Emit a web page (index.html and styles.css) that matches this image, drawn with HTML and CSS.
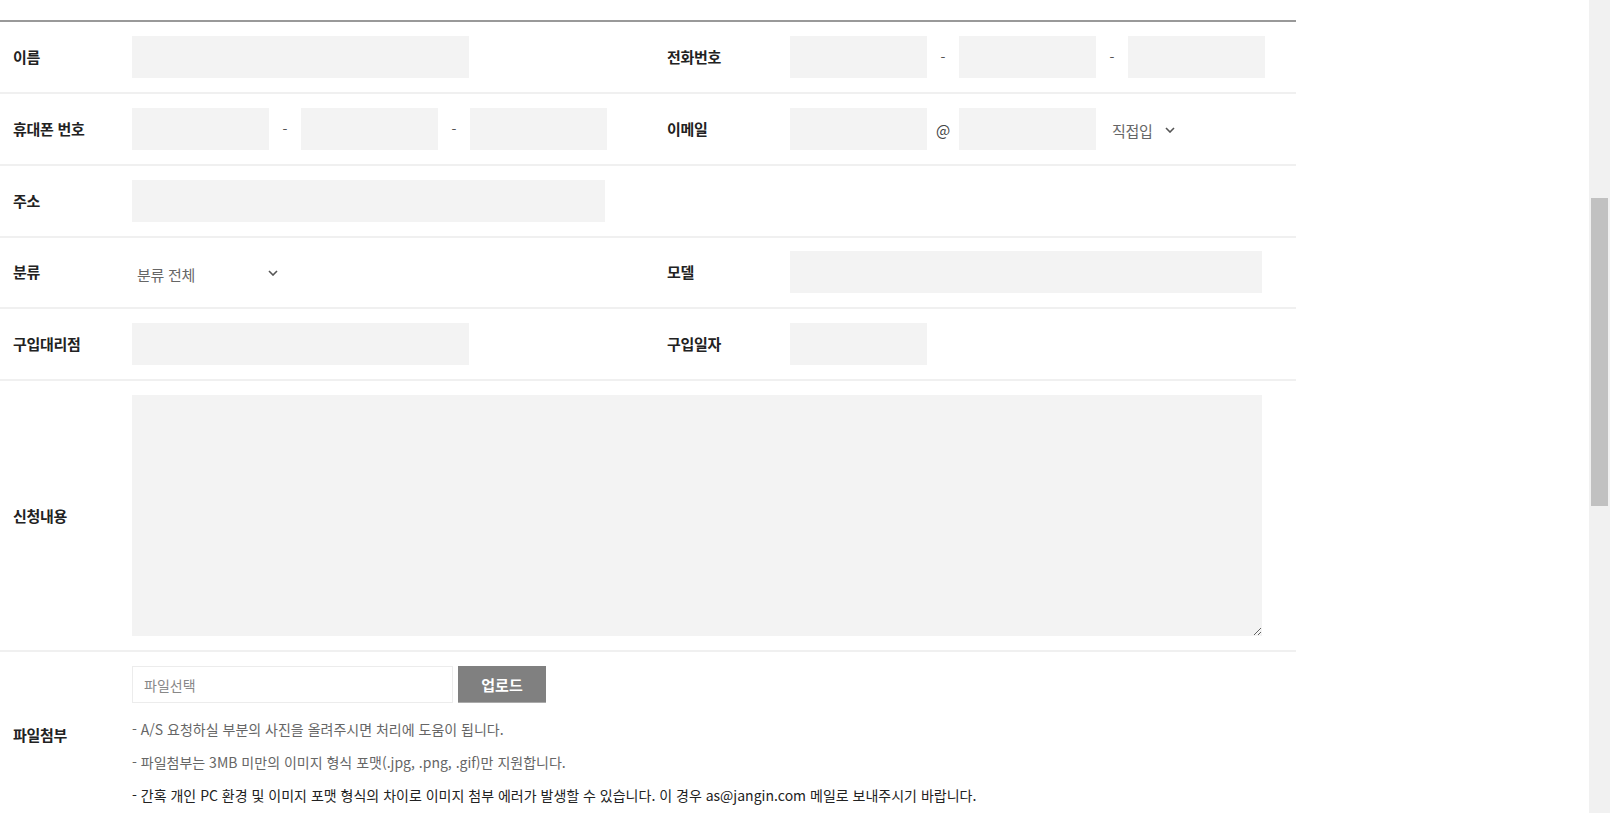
FILE: index.html
```html
<!DOCTYPE html>
<html lang="ko">
<head>
<meta charset="utf-8">
<title>A/S 신청</title>
<link rel="stylesheet" href="styles.css">
</head>
<body>
<div class="page">
  <main class="main">
    <div class="form">
      <div class="row">
        <div class="label">이름</div>
        <div class="fields"><input class="inp w-name" type="text"></div>
        <div class="label">전화번호</div>
        <div class="fields">
          <input class="inp w-s" type="text"><span class="sep">-</span>
          <input class="inp w-s" type="text"><span class="sep">-</span>
          <input class="inp w-s" type="text">
        </div>
      </div>
      <div class="row">
        <div class="label">휴대폰 번호</div>
        <div class="fields">
          <input class="inp w-s" type="text"><span class="sep">-</span>
          <input class="inp w-s" type="text"><span class="sep">-</span>
          <input class="inp w-s" type="text">
        </div>
        <div class="label">이메일</div>
        <div class="fields">
          <input class="inp w-s" type="text"><span class="sep at">@</span>
          <input class="inp w-s" type="text">
          <div class="select sel-email"><span>직접입</span>
            <svg class="chev" width="10" height="6" viewBox="0 0 10 6"><path d="M1 1 L5 5 L9 1" fill="none" stroke="#555" stroke-width="1.6"/></svg>
          </div>
        </div>
      </div>
      <div class="row">
        <div class="label">주소</div>
        <div class="fields span3"><input class="inp w-addr" type="text"></div>
      </div>
      <div class="row row-tight">
        <div class="label">분류</div>
        <div class="fields">
          <div class="select sel-cat"><span>분류 전체</span>
            <svg class="chev" width="10" height="6" viewBox="0 0 10 6"><path d="M1 1 L5 5 L9 1" fill="none" stroke="#555" stroke-width="1.6"/></svg>
          </div>
        </div>
        <div class="label">모델</div>
        <div class="fields"><input class="inp w-model" type="text"></div>
      </div>
      <div class="row">
        <div class="label">구입대리점</div>
        <div class="fields"><input class="inp w-name" type="text"></div>
        <div class="label">구입일자</div>
        <div class="fields"><input class="inp w-s" type="text"></div>
      </div>
      <div class="row">
        <div class="label">신청내용</div>
        <div class="fields span3"><textarea class="area"></textarea></div>
      </div>
      <div class="row row-file">
        <div class="label label-file">파일첨부</div>
        <div class="span3">
          <div class="file-line">
            <div class="file-box">파일선택</div>
            <button class="btn-up" type="button">업로드</button>
          </div>
          <ul class="notes">
            <li>- A/S 요청하실 부분의 사진을 올려주시면 처리에 도움이 됩니다.</li>
            <li>- 파일첨부는 3MB 미만의 이미지 형식 포맷(.jpg, .png, .gif)만 지원합니다.</li>
            <li class="dark">- 간혹 개인 PC 환경 및 이미지 포맷 형식의 차이로 이미지 첨부 에러가 발생할 수 있습니다. 이 경우 as@jangin.com 메일로 보내주시기 바랍니다.</li>
          </ul>
        </div>
      </div>
    </div>
  </main>
  <div class="scrollbar"><div class="thumb"></div></div>
</div>
</body>
</html>
```

FILE: styles.css
```css
* { box-sizing: border-box; }
html, body { margin: 0; padding: 0; height: 100%; overflow: hidden; background: #fff; }
body {
  font-family: "Noto Sans CJK KR", "Noto Sans", sans-serif;
  color: #222;
}
.page { display: flex; height: 813px; }
.main { flex: 1; padding-top: 20px; overflow: hidden; }
.form { width: 1296px; border-top: 2px solid #999; }
.row {
  display: grid;
  grid-template-columns: 132px 522px 136px 1fr;
  align-items: center;
  padding: 14px 0;
  border-bottom: 2px solid #f0f0f0;
}
.row-tight { padding-top: 13px; }
.label {
  padding-left: 13px;
  font-size: 15px;
  font-weight: 700;
  color: #222;
  letter-spacing: -0.3px;
  line-height: 20px;
}
.fields { display: flex; align-items: center; height: 42px; }
.span3 { grid-column: 2 / 5; }
.fields.span3 { height: auto; }
.inp {
  height: 42px;
  border: none;
  background: #f3f3f3;
  margin: 0;
  padding: 0 10px;
  font-family: inherit;
  font-size: 14px;
  outline: none;
}
.w-s { width: 137px; }
.w-name { width: 337px; }
.w-addr { width: 473px; }
.w-model { width: 472px; }
.sep {
  width: 32px;
  text-align: center;
  font-size: 14px;
  color: #555;
}
.sep.at { font-size: 15px; color: #444; }
.select {
  display: flex;
  align-items: center;
  font-size: 15px;
  color: #666;
  letter-spacing: -0.3px;
}
.sel-cat { padding-left: 5px; width: 146px; justify-content: space-between; padding-top: 4px; }
.sel-email { margin-left: 16px; gap: 12px; padding-top: 2px; }
.chev { display: block; }
.sel-cat .chev { margin-top: -3px; }
.area {
  display: block;
  width: 1130px;
  height: 241px;
  border: none;
  background: #f3f3f3;
  margin: 0;
  padding: 10px;
  font-family: inherit;
  font-size: 14px;
  outline: none;
}
.row-file { padding-bottom: 6px; padding-top: 14px; }
.label-file { align-self: start; margin-top: 59px; }
.file-line { display: flex; align-items: center; gap: 5px; }
.file-box {
  width: 321px;
  height: 37px;
  border: 1px solid #ececec;
  display: flex;
  align-items: center;
  padding-left: 11px;
  font-size: 14px;
  color: #888;
}
.btn-up {
  width: 88px;
  height: 37px;
  border: none;
  border-bottom: 1px solid #aaa;
  background: #808080;
  color: #fff;
  font-family: inherit;
  font-size: 15px;
  font-weight: 700;
  padding: 0;
  margin: 0;
}
.notes {
  list-style: none;
  margin: 10px 0 0;
  padding: 0;
  font-size: 14px;
  line-height: 33px;
  color: #666;
}
.notes .dark { color: #222; }
.scrollbar {
  width: 21px;
  height: 813px;
  background: #f1f1f1;
  padding: 198px 2px 0;
}
.thumb { height: 308px; background: #c1c1c1; }
```
